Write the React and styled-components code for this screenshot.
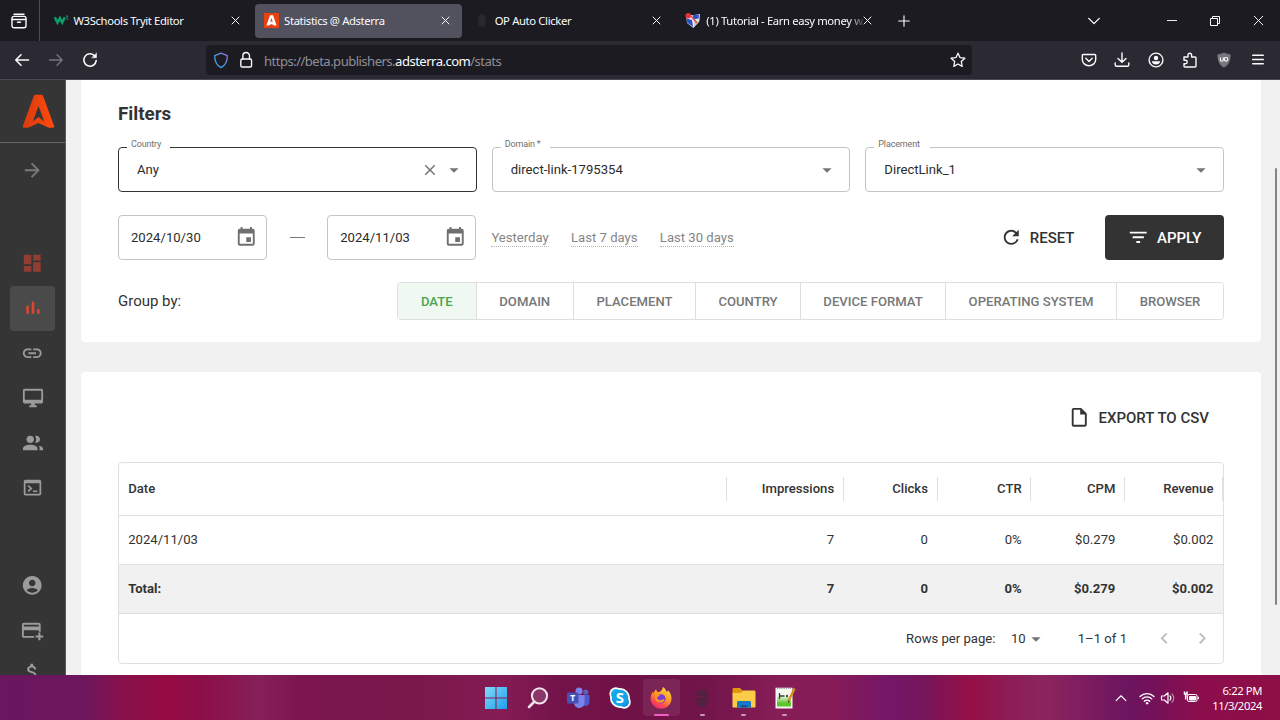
import React from "react";
import styled, { createGlobalStyle, css } from "styled-components";
import {
  MdAccountCircle,
  MdArrowDropDown,
  MdArrowForward,
  MdAttachMoney,
  MdChevronLeft,
  MdChevronRight,
  MdClose,
  MdDashboard,
  MdEvent,
  MdFilterList,
  MdLink,
  MdRefresh,
  MdOutlineInsertDriveFile,
} from "react-icons/md";

const GlobalStyle = createGlobalStyle`
  *, *::before, *::after { box-sizing: border-box; }
  body { margin: 0; overflow: hidden; background: #1c1b22; }
  svg { display: block; flex: none; }
`;

const ui = `"Noto Sans", "Open Sans", sans-serif`;

/* ---------- window ---------- */

const Window = styled.div`
  width: 1280px;
  height: 720px;
  display: flex;
  flex-direction: column;
  overflow: hidden;
  font-family: Roboto, sans-serif;
  color: #333;
`;

/* ---------- tab bar ---------- */

const TabBar = styled.div`
  height: 41px;
  flex: none;
  display: flex;
  align-items: center;
  background: #1c1b22;
  color: #fbfbfe;
`;

const ViewButton = styled.div`
  width: 40px;
  height: 41px;
  padding-left: 11px;
  display: flex;
  align-items: center;
  border-right: 1px solid #4b4a55;
`;

const Tabs = styled.div`
  display: flex;
  align-items: center;
  margin-left: 4.5px;
`;

const Tab = styled.div`
  width: 206.6px;
  margin-right: 4px;
  height: 34px;
  padding: 0 11.5px 0 9px;
  display: flex;
  align-items: center;
  border-radius: 4px;
  background: ${(p) => (p.$active ? "#52515e" : "transparent")};
`;

const TabTitle = styled.div`
  flex: 1;
  margin-left: 5px;
  padding-top: 1px;
  white-space: nowrap;
  font: 400 11.25px/16px ${ui};
  letter-spacing: -0.35px;
  ${(p) =>
    p.$fade &&
    css`
      mask-image: linear-gradient(to right, #000 calc(100% - 14px), transparent calc(100% + 3px));
    `}
`;

const WindowControls = styled.div`
  margin-left: auto;
  display: flex;
  align-items: center;
  padding-right: 16px;
`;

const ControlSlot = styled.div`
  width: ${(p) => p.$w}px;
  display: flex;
  justify-content: flex-end;
`;

const NewTab = styled.div`
  margin-left: 11.2px;
`;

/* ---------- toolbar ---------- */

const Toolbar = styled.div`
  height: 39px;
  flex: none;
  display: flex;
  align-items: center;
  background: #2b2a33;
  color: #fbfbfe;
  border-bottom: 1px solid #4a4953;
`;

const NavButtons = styled.div`
  width: 206px;
  display: flex;
  gap: 18px;
  padding-left: 14px;
`;

const AddressBar = styled.div`
  width: 766px;
  height: 30px;
  display: flex;
  align-items: center;
  padding: 0 6px 0 7px;
  border-radius: 4px;
  background: #1c1b22;
`;

const LockSlot = styled.span`
  margin-left: 7px;
`;

const Address = styled.div`
  flex: 1;
  margin-left: 6px;
  padding-top: 2px;
  font: 400 13.1px/20px ${ui};
  letter-spacing: -0.54px;
  color: #8f8f98;
  b {
    font-weight: 400;
    color: #fbfbfe;
  }
`;

const ToolbarActions = styled.div`
  display: flex;
  flex: 1;
  justify-content: flex-end;
  gap: 17.8px;
  padding-right: 14.5px;
`;

/* ---------- page ---------- */

const Page = styled.div`
  flex: 1;
  min-height: 0;
  display: flex;
  background: #f1f1f1;
`;

const Sidebar = styled.nav`
  width: 66px;
  display: flex;
  flex-direction: column;
  align-items: center;
  background: #353535;
  border-right: 1px solid #5a5a5a;
  overflow: hidden;
`;

const Brand = styled.div`
  width: 100%;
  height: 63px;
  flex: none;
  display: flex;
  padding: 14px 0 0 22px;
  border-bottom: 1px solid #666;
`;

const NavItem = styled.div`
  width: 45px;
  height: 44.8px;
  flex: none;
  display: flex;
  align-items: center;
  justify-content: center;
  border-radius: 4px;
  margin-top: ${(p) => p.$before || 0}px;
  color: ${(p) => p.$tone || "#9b9b9b"};
  background: ${(p) => (p.$active ? "#4a4a4a" : "transparent")};
`;

const Content = styled.main`
  flex: 1;
  display: flex;
  flex-direction: column;
  gap: 30px;
  padding: 0 14px 0 15px;
  overflow: hidden;
`;

const Card = styled.section`
  flex: none;
  height: ${(p) => p.$h}px;
  padding: 0 37px;
  background: #fff;
  border-radius: ${(p) => (p.$flush ? "0 0 4px 4px" : "4px")};
`;

const Heading = styled.h2`
  margin: 0;
  padding-top: 22px;
  font: 700 18.75px/24px Roboto, sans-serif;
`;

const FieldRow = styled.div`
  display: flex;
  gap: 15px;
  margin-top: 21px;
`;

const Field = styled.div`
  position: relative;
  flex: 1;
  height: 45px;
  display: flex;
  align-items: center;
  padding: 0 11px 0 18px;
  border: 1px solid ${(p) => (p.$focused ? "#333" : "#c4c4c4")};
  border-radius: 4px;
  font-size: 13.125px;
  color: #2c2c2c;
`;

const FieldLabel = styled.span`
  position: absolute;
  top: -10px;
  left: 8px;
  width: ${(p) => p.$w}px;
  height: 12px;
  padding-left: 4px;
  background: #fff;
  font-size: 9px;
  line-height: 13px;
  letter-spacing: -0.15px;
  white-space: nowrap;
  color: #707070;
`;

const FieldValue = styled.span`
  flex: 1;
`;

const FieldIcons = styled.span`
  display: flex;
  align-items: center;
  gap: 4px;
  color: #757575;
`;

const DateRow = styled.div`
  display: flex;
  align-items: center;
  margin-top: 23px;
`;

const DateField = styled.div`
  width: 149.2px;
  height: 45px;
  display: flex;
  align-items: center;
  justify-content: space-between;
  padding: 0 8.5px 0 12px;
  border: 1px solid #c4c4c4;
  border-radius: 4px;
  font-size: 13.125px;
  color: #2c2c2c;
  svg {
    color: #6f6f6f;
  }
`;

const RangeDash = styled.span`
  width: 15px;
  height: 1px;
  margin: 0 22.5px;
  background: #777;
`;

const Presets = styled.div`
  display: flex;
  gap: 22.3px;
  margin-left: 15px;
`;

const Preset = styled.a`
  font-size: 13.125px;
  line-height: 17px;
  color: #858585;
  border-bottom: 1px dotted #b5b5b5;
`;

const FilterActions = styled.div`
  display: flex;
  align-items: center;
  margin-left: auto;
`;

const ActionButton = styled.div`
  display: flex;
  align-items: center;
  height: 45px;
  gap: ${(p) => p.$gap || 7.5}px;
  font-size: 15px;
  font-weight: 500;
  white-space: nowrap;
`;

const ResetButton = styled(ActionButton)`
  margin-right: 30.5px;
`;

const ApplyButton = styled(ActionButton)`
  width: 119px;
  padding-left: 22px;
  border-radius: 4px;
  background: #333;
  color: #fff;
`;

const GroupRow = styled.div`
  display: flex;
  align-items: center;
  justify-content: space-between;
  margin-top: 22px;
  font-size: 15px;
`;

const ToggleGroup = styled.div`
  display: flex;
  height: 38px;
  border: 1px solid #dedede;
  border-radius: 4px;
  overflow: hidden;
`;

const Toggle = styled.div`
  width: ${(p) => p.$w}px;
  display: flex;
  align-items: center;
  justify-content: center;
  font-size: 13.125px;
  font-weight: 500;
  color: ${(p) => (p.$on ? "#4ca54f" : "#777")};
  background: ${(p) => (p.$on ? "#eff8f1" : "#fff")};
  & + & {
    border-left: 1px solid #dedede;
  }
`;

const ExportRow = styled.div`
  display: flex;
  justify-content: flex-end;
  padding: 23px 15px 0 0;
`;

/* ---------- table ---------- */

const Table = styled.div`
  margin-top: 22px;
  border: 1px solid #e0e0e0;
  border-radius: 4px;
  overflow: hidden;
  font-size: 13.125px;
`;

const Row = styled.div`
  display: grid;
  grid-template-columns: 1fr 117.2px 93.75px 93.75px 93.75px 98px;
  align-items: center;
  height: ${(p) => (p.$head ? 53 : 49)}px;
  border-bottom: 1px solid #e0e0e0;
  background: ${(p) => (p.$total ? "#f1f1f1" : "transparent")};
  font-weight: ${(p) => (p.$total ? 700 : p.$head ? 500 : 400)};
`;

const Cell = styled.div`
  padding: 0 8.6px 0 9.2px;
  text-align: right;
  line-height: 24px;
  border-right: ${(p) => (p.$sep ? "1px solid #e0e0e0" : "1px solid transparent")};
  &:first-child {
    text-align: left;
  }
`;

const Footer = styled.div`
  height: 49px;
  display: flex;
  align-items: center;
  justify-content: flex-end;
  padding-right: 10px;
`;

const PageSize = styled.span`
  display: flex;
  align-items: center;
  margin: 0 30.5px 0 15.5px;
  svg {
    color: #757575;
    margin-left: -0.5px;
  }
`;

const Pager = styled.span`
  display: flex;
  gap: 15px;
  margin-left: 26px;
  color: #bdbdbd;
`;

const ScrollTrack = styled.div`
  width: 5px;
  padding-top: 88px;
`;

const ScrollThumb = styled.div`
  width: 2px;
  height: 437px;
  border-radius: 1px;
  background: #858585;
`;

/* ---------- taskbar ---------- */

const Taskbar = styled.div`
  height: 45px;
  flex: none;
  display: flex;
  align-items: center;
  padding-left: 475.8px;
  color: #fff;
  background: linear-gradient(
    90deg,
    #6a1660 0px, #6d165c 85px, #84124e 115px, #960b43 163px, #8c0f48 205px, #86205a 258px,
    #7b1650 300px, #7a184b 420px, #851c55 500px, #73134a 560px, #6f1247 640px, #72154a 710px,
    #871d57 780px, #861b58 835px, #741767 890px, #77165b 925px, #960f47 970px, #8d1d56 1010px,
    #8b255e 1045px, #7e1c60 1085px, #6c155f 1125px, #741159 1155px, #8c0d4c 1200px, #8c0f45 1280px
  );
`;

const TaskItem = styled.div`
  width: 41.2px;
  height: 45px;
  flex: none;
  display: flex;
  flex-direction: column;
  align-items: center;
`;

const TaskTile = styled.div`
  width: 37px;
  height: 37px;
  margin-top: 4px;
  display: flex;
  flex-direction: column;
  align-items: center;
  justify-content: space-between;
  padding: 8px 0 0;
  border-radius: 4px;
  background: ${(p) => (p.$active ? "rgba(255,255,255,.08)" : "transparent")};
`;

const Indicator = styled.span`
  width: ${(p) => (p.$active ? 15 : 5)}px;
  height: 2.5px;
  border-radius: 2px;
  background: ${(p) => (p.$active ? "#f25fc4" : "#c79ab4")};
`;

const Tray = styled.div`
  margin-left: auto;
  display: flex;
  align-items: center;
  padding-right: 18px;
`;

const TrayIcons = styled.div`
  display: flex;
  align-items: center;
`;

const TraySlot = styled.span`
  margin-right: ${(p) => p.$after}px;
`;

const Clock = styled.div`
  width: 62px;
  text-align: right;
  white-space: nowrap;
  font: 400 11.25px/15px ${ui};
  letter-spacing: -0.4px;
`;

/* ---------- icons ---------- */

const Stroke = ({ size = 16, w = 1.3, children, ...rest }) => (
  <svg width={size} height={size} viewBox="0 0 16 16" fill="none" stroke="currentColor" strokeWidth={w} strokeLinecap="round" strokeLinejoin="round" {...rest}>
    {children}
  </svg>
);

const Cross = ({ size = 9, w = 1 }) => (
  <svg width={size} height={size} viewBox="0 0 9 9" stroke="currentColor" strokeWidth={w} strokeLinecap="round">
    <path d="M1 1l7 7M8 1L1 8" />
  </svg>
);

const W3Icon = () => (
  <svg width="15" height="15" viewBox="0 0 15 15" fill="none" stroke="#0c9f6a">
    <path d="M.8 4.200l2.700 5.300 2.400-4.300 2.300 4.300 2.600-5.300" strokeWidth="2.500" strokeLinejoin="miter" />
    <path d="M12 3h2l-1.200 1.600c1.400 0 1.400 2.200-.4 2" strokeWidth="1" />
  </svg>
);

const AdFavicon = () => (
  <svg width="15" height="15" viewBox="0 0 15 15">
    <rect width="15" height="15" fill="#e8400f" />
    <path fill="#fff" fillRule="evenodd" d="M6 2.200h3l3.600 10.200h-2.400L7.500 11l-2.700 1.400H2.400zM7.500 5l-1.300 4 1.300-.6 1.300.6z" />
  </svg>
);

const MouseFavicon = () => (
  <svg width="15" height="15" viewBox="0 0 15 15">
    <rect x="3.500" y="1" width="7" height="13" rx="3.500" fill="#29282e" />
  </svg>
);

const ShieldFavicon = () => (
  <svg width="16" height="15" viewBox="0 0 16 15">
    <path d="M1 1.500l7 .7 7-1.200-.7 7.500L8.400 15 2 10z" fill="#e8e6ee" />
    <path d="M8 2.200l6-.8-.4 4L8 6.500z" fill="#2a53c4" />
    <path d="M1.500 5.500L7 7l1 7-5.700-4.300z" fill="#2952c0" />
    <path d="M9 8.500l4.700-1.300-.4 2.600L9 13.500z" fill="#cfc6b4" />
    <path d="M6 3l6 7" stroke="#e04a52" strokeWidth="1.500" />
    <circle cx="3.200" cy="2.700" r="2.700" fill="#e8323c" />
  </svg>
);

const AdLogo = () => (
  <svg width="33" height="35" viewBox="0 0 33 35">
    <defs>
      <linearGradient id="brand" x1="0" x2="1">
        <stop offset="0" stopColor="#d93a10" />
        <stop offset="1" stopColor="#ff4a0c" />
      </linearGradient>
    </defs>
    <path
      fill="url(#brand)"
      fillRule="evenodd"
      d="M13.400 .8h6.100c.8 0 1.300.4 1.600 1.100l11 30.200c.3.900-.2 1.600-1.200 1.600h-4.200L16.500 29 6.200 33.700H2c-1 0-1.500-.7-1.200-1.600l11-30.200c.3-.7.8-1.100 1.600-1.100zM16.500 12L10.800 27.500l5.700-4.500 5.700 4.500z"
    />
  </svg>
);

const BarsIcon = () => (
  <svg width="14" height="14" viewBox="0 0 14 14" stroke="#e0442f" strokeWidth="2.600" strokeLinecap="round">
    <path d="M1.600 5.800v6M7 1.800v10M12.300 9.300v2.500" />
  </svg>
);

const DesktopIcon = () => (
  <svg width="22" height="22" viewBox="0 0 24 24" fill="currentColor">
    <path fillRule="evenodd" d="M21 2H3c-1.100 0-2 .9-2 2v12c0 1.100.9 2 2 2h7v2H8v2h8v-2h-2v-2h7c1.100 0 2-.9 2-2V4c0-1.100-.9-2-2-2zm0 12H3V4h18z" />
  </svg>
);

const PeopleIcon = () => (
  <svg width="22" height="22" viewBox="0 0 24 24" fill="currentColor">
    <circle cx="9" cy="8" r="4" />
    <path d="M1 18.500C1 15 5 13.800 9 13.800s8 1.200 8 4.700V20H1zM14.300 11.600c1.600-2.100 1.600-5.100 0-7.200 2.800-.9 5.300 1 5.300 3.600s-2.500 4.500-5.300 3.600zM19.200 20v-2.500c0-1.200-.4-1.900-.9-2.600 2.800.4 4.700 1.500 4.700 3.600V20z" />
  </svg>
);

const ConsoleIcon = () => (
  <svg width="21" height="21" viewBox="0 0 24 24" fill="currentColor">
    <path fillRule="evenodd" d="M4 3h16a2 2 0 012 2v14a2 2 0 01-2 2H4a2 2 0 01-2-2V5c0-1.100.9-2 2-2zm0 4v12h16V7z" />
    <path d="M7.700 9L12 13l-4.300 4-1.400-1.400L9.100 13l-2.800-2.600zM12.500 15.300h5V17h-5z" />
  </svg>
);

const CardPlusIcon = () => (
  <svg width="22.500" height="22.500" viewBox="0 0 24 24" fill="currentColor">
    <path fillRule="evenodd" d="M3 4h16c1.100 0 2 .9 2 2v7.500h-2V12H3v6h11v2H3c-1.100 0-2-.9-2-2V6c0-1.100.9-2 2-2zm0 2v2h16V6z" />
    <path d="M18.500 14.500h2.200v3h3v2.200h-3v3h-2.200v-3h-3v-2.200h3z" />
  </svg>
);

const WindowsIcon = () => (
  <svg width="22" height="22" viewBox="0 0 22 22">
    <defs>
      <linearGradient id="win" x1="0" y1="0" x2="1" y2="1">
        <stop offset="0" stopColor="#83dbfb" />
        <stop offset="1" stopColor="#1e9eea" />
      </linearGradient>
    </defs>
    <path fill="url(#win)" d="M0 0h10.500v10.500H0zM11.500 0H22v10.500H11.500zM0 11.500h10.500V22H0zM11.500 11.500H22V22H11.500z" />
  </svg>
);

const SearchIcon = () => (
  <svg width="22" height="22" viewBox="0 0 22 22" fill="none" stroke="#eee3ea" strokeLinecap="round">
    <circle cx="12.500" cy="8.800" r="7.600" strokeWidth="2" fill="#8a3767" />
    <path d="M7 15l-5 5" strokeWidth="2.600" />
  </svg>
);

const Glyph = styled.text`
  font-family: "Open Sans", sans-serif;
  font-weight: 700;
  text-anchor: middle;
`;

const TeamsIcon = () => (
  <svg width="23" height="22" viewBox="0 0 23 22">
    <circle cx="18.800" cy="5" r="2.600" fill="#5660c4" />
    <circle cx="12" cy="4" r="3.500" fill="#7b83eb" />
    <path d="M14 8h8.500v6.500c0 3-2 4.500-4.500 4.500h-4z" fill="#5059c9" />
    <path d="M7 8h10.500v7.500c0 3-2.300 5.500-5.300 5.500S7 18.500 7 15.500z" fill="#7b83eb" />
    <rect y="5.500" width="11.500" height="11" rx="1" fill="#4650b8" />
    <Glyph x="5.700" y="14" fontSize="8.500" fill="#fff">T</Glyph>
  </svg>
);

const SkypeIcon = () => (
  <svg width="22" height="22" viewBox="0 0 22 22">
    <circle cx="6.800" cy="6.800" r="6.500" fill="#fff" />
    <circle cx="15.200" cy="15.200" r="6.500" fill="#fff" />
    <circle cx="11" cy="11" r="10" fill="#fff" />
    <circle cx="7" cy="7" r="5" fill="#1bb2ee" />
    <circle cx="15" cy="15" r="5" fill="#1190dc" />
    <circle cx="11" cy="11" r="8.300" fill="#16a4e6" />
    <Glyph x="11" y="16.300" fontSize="15" fill="#fff">S</Glyph>
  </svg>
);

const FirefoxIcon = () => (
  <svg width="22" height="22" viewBox="0 0 22 22">
    <defs>
      <linearGradient id="fox" x1=".8" y1="0" x2=".25" y2="1">
        <stop offset="0" stopColor="#ffe03a" />
        <stop offset=".45" stopColor="#ff9a26" />
        <stop offset=".75" stopColor="#ff4a4c" />
        <stop offset="1" stopColor="#e8247f" />
      </linearGradient>
    </defs>
    <path fill="url(#fox)" d="M13 0c2 1.200 3 3 3.500 4.800.8-.1 1.400-.8 1.600-1.600 2.200 2.400 3.400 5.200 3.400 8 0 6-4.700 10.500-10.400 10.500S.6 17.300.6 11.500C.6 8.300 1.900 6 3 4.500c0 .8.200 1.300.6 1.700C4.400 4.600 5 3.300 6.200 2.300c.1 1.300.7 2.300 2 3C10.300 5.200 12.500 3 13 0z" />
    <circle cx="11" cy="11.800" r="4.600" fill="#7a3fd0" />
    <path fill="#ff9428" d="M5 8.200c2-1 4-.7 5 .4-1.400.2-1.500 1.300-3 1.800.5 2.600 3 3.600 5.400 2.200 1-.5 1.700-.3 2.200.2-.8 3-5.600 4-8 1.500C5 12.700 4.400 10 5 8.200z" />
  </svg>
);

const MouseIcon = () => (
  <svg width="22" height="22" viewBox="0 0 22 22">
    <rect x="5.500" y="2" width="11" height="18" rx="5.500" fill="#51213f" />
    <path d="M5.500 9.500h11M11 2v7.500" stroke="#6b1a4c" strokeWidth="1" />
  </svg>
);

const FolderIcon = () => (
  <svg width="24" height="22" viewBox="0 0 24 22">
    <path d="M.5 2.500c0-.9.6-1.500 1.500-1.500h6l2.500 2.500-2 3.500h-8z" fill="#e3980c" />
    <path d="M.5 6h8l2.300-2.500H22c.9 0 1.500.6 1.500 1.500v14.500c0 .7-.5 1-1 1H1.500c-.6 0-1-.4-1-1z" fill="#fbcd47" />
    <path d="M5 20.500v-5c0-1 .7-1.600 1.600-1.600h10.800c1 0 1.600.6 1.600 1.600v5z" fill="#1877c4" />
    <path d="M8.500 18h7v2.500h-7z" fill="#0c599f" />
  </svg>
);

const NotepadIcon = () => (
  <svg width="22" height="22" viewBox="0 0 22 22">
    <defs>
      <linearGradient id="note" x2="0" y2="1">
        <stop offset=".35" stopColor="#f4f8ee" />
        <stop offset=".8" stopColor="#5cc52c" />
      </linearGradient>
    </defs>
    <path d="M1.500.7h17V21.500h-17z" fill="#f5f5f5" />
    <path d="M3 3h14v16.500H3z" fill="url(#note)" />
    <path d="M3 1.500h14" stroke="#9aa39a" strokeWidth="1" strokeDasharray="1.200 1" />
    <path d="M5.500 6v6M5.500 9h4M9.500 9h1M12 9h2M13 7.800v2.400" stroke="#33412f" strokeWidth="1.300" />
    <path d="M20.500 1.500L14 15" stroke="#d8921f" strokeWidth="2.400" />
    <path d="M14.500 13.500l-1 3 2.300-2z" fill="#4b3a2a" />
  </svg>
);

/* ---------- data ---------- */

const tabs = [
  { title: "W3Schools Tryit Editor", icon: <W3Icon /> },
  { title: "Statistics @ Adsterra", icon: <AdFavicon />, active: true },
  { title: "OP Auto Clicker", icon: <MouseFavicon /> },
  { title: "(1) Tutorial - Earn easy money w", icon: <ShieldFavicon />, fade: true },
];

const groups = [
  ["DATE", 77.5],
  ["DOMAIN", 97.5],
  ["PLACEMENT", 122],
  ["COUNTRY", 105],
  ["DEVICE FORMAT", 145],
  ["OPERATING SYSTEM", 171],
  ["BROWSER", 107],
];

const tasks = [
  { id: "start", icon: <WindowsIcon /> },
  { id: "search", icon: <SearchIcon /> },
  { id: "teams", icon: <TeamsIcon /> },
  { id: "skype", icon: <SkypeIcon /> },
  { id: "firefox", icon: <FirefoxIcon />, open: true, active: true },
  { id: "clicker", icon: <MouseIcon />, open: true },
  { id: "files", icon: <FolderIcon />, open: true },
  { id: "notepad", icon: <NotepadIcon />, open: true },
];

/* ---------- sections ---------- */

const BrowserChrome = () => (
  <>
    <TabBar>
      <ViewButton>
        <Stroke w={1.4}>
          <path d="M3 1.200h10" />
          <rect x="1" y="3.400" width="14" height="11.400" rx="2" />
          <path d="M1 6.500h14M6.500 9.300h3" />
        </Stroke>
      </ViewButton>
      <Tabs>
        {tabs.map((t) => (
          <Tab key={t.title} $active={t.active}>
            {t.icon}
            <TabTitle $fade={t.fade}>{t.title}</TabTitle>
            <Cross />
          </Tab>
        ))}
      </Tabs>
      <NewTab>
        <Stroke size={12} w={1.500}>
          <path d="M8 1v14M1 8h14" />
        </Stroke>
      </NewTab>
      <WindowControls>
        <Stroke size={12} w={1.800}>
          <path d="M1 4.500l7 7 7-7" />
        </Stroke>
        <ControlSlot $w={77}>
          <svg width="10" height="10"><path d="M0 4.500h10" stroke="#e8e8ec" /></svg>
        </ControlSlot>
        <ControlSlot $w={43}>
          <svg width="10" height="10" fill="none" stroke="#fbfbfe">
            <path d="M.5 2.500h7v7h-7zM2.500 2.500v-2h7v7h-2" />
          </svg>
        </ControlSlot>
        <ControlSlot $w={44}>
          <Cross size={11} w={0.8} />
        </ControlSlot>
      </WindowControls>
    </TabBar>
    <Toolbar>
      <NavButtons>
        <Stroke w={1.600}><path d="M14.500 8H1.800M7 2.800L1.800 8 7 13.200" /></Stroke>
        <Stroke w={1.300} color="#77767f"><path d="M1.500 8h12.700M9 2.800L14.200 8 9 13.200" /></Stroke>
        <Stroke w={1.600}>
          <path d="M14.200 8.600A6.200 6.200 0 1 1 12.800 4" />
          <path d="M14.500 1.300v4.500H10z" fill="currentColor" strokeWidth=".5" />
        </Stroke>
      </NavButtons>
      <AddressBar>
        <svg width="16" height="17" viewBox="0 0 16 17" fill="none">
          <defs>
            <linearGradient id="protect" x1="0" y1="1" x2="1" y2="0">
              <stop offset="0" stopColor="#2fb2e8" />
              <stop offset=".6" stopColor="#5f93dc" />
              <stop offset="1" stopColor="#a06ad8" />
            </linearGradient>
          </defs>
          <path d="M8 1.200l6.300 2.400c.1 5.400-1.500 9.700-6.300 12C3.200 13.300 1.600 9 1.700 3.600z" stroke="url(#protect)" strokeWidth="1.300" strokeLinejoin="round" />
        </svg>
        <LockSlot>
          <Stroke size={22} w={1}>
            <rect x="3.500" y="7.300" width="7.800" height="5.800" rx="1" />
            <path d="M5 7.200V4.900a2.400 2.400 0 0 1 4.800 0v2.300" />
          </Stroke>
        </LockSlot>
        <Address>https://beta.publishers.<b>adsterra.com</b>/stats</Address>
        <Stroke w={1.300}>
          <path d="M8 1.200l2 4.400 4.900.6-3.600 3.300.9 4.900L8 12l-4.200 2.400.9-4.900L1.100 6.200l4.900-.6z" />
        </Stroke>
      </AddressBar>
      <ToolbarActions>
        <Stroke w={1.400}>
          <path d="M2.300 2.500h11.400c.6 0 1 .4 1 1v4a6.700 6.200 0 0 1-13.400 0v-4c0-.6.400-1 1-1z" />
          <path d="M4.800 6.300L8 9.400l3.200-3.100" />
        </Stroke>
        <Stroke w={1.400}>
          <path d="M8 1v9M4 6.500L8 10.300l4-3.800M1.200 11v1.800c0 1 .6 1.500 1.500 1.500h10.600c.9 0 1.500-.5 1.500-1.500V11" />
        </Stroke>
        <Stroke w={1.400}>
          <circle cx="8" cy="8" r="6.900" />
          <circle cx="8" cy="6" r="2.200" fill="currentColor" stroke="none" />
          <path d="M3.800 9.300h8.400C11.900 11.400 10 12.500 8 12.500s-3.900-1.100-4.200-3.200z" fill="currentColor" stroke="none" />
        </Stroke>
        <Stroke w={1.400}>
          <path d="M2 5h4V3a1.800 1.800 0 0 1 3.600 0v2H13c.6 0 1 .4 1 1v8c0 .6-.4 1-1 1H3c-.6 0-1-.4-1-1v-2.300h1.500a1.700 1.700 0 0 0 0-3.400H2z" />
        </Stroke>
        <svg width="16" height="16" viewBox="0 0 16 16">
          <path d="M8 .5c2 1.200 4.400 1.800 6.500 1.800C14.700 9 12.600 13.300 8 15.500 3.400 13.300 1.300 9 1.500 2.300 3.600 2.300 6 1.700 8 .5z" fill="#77777d" />
          <path d="M4.300 5.500v2.200a1.500 1.500 0 0 0 3 0V5.500" fill="none" stroke="#fff" strokeWidth="1.100" />
          <circle cx="10" cy="7.300" r="1.800" fill="none" stroke="#fff" strokeWidth="1.100" />
        </svg>
        <Stroke w={1.400}><path d="M2.700 3.200h10.600M2.700 7.500h10.600M2.700 11.800h10.600" /></Stroke>
      </ToolbarActions>
    </Toolbar>
  </>
);

const SideNav = () => (
  <Sidebar>
    <Brand><AdLogo /></Brand>
    <NavItem $before={4.500} $tone="#7b7b7b"><MdArrowForward size={22.500} /></NavItem>
    <NavItem $before={48.700} $tone="#913d33"><MdDashboard size={22.500} /></NavItem>
    <NavItem $active><BarsIcon /></NavItem>
    <NavItem><MdLink size={22.500} /></NavItem>
    <NavItem><DesktopIcon /></NavItem>
    <NavItem><PeopleIcon /></NavItem>
    <NavItem><ConsoleIcon /></NavItem>
    <NavItem $before={53.500}><MdAccountCircle size={22.500} /></NavItem>
    <NavItem><CardPlusIcon /></NavItem>
    <NavItem $before={-3.500}><MdAttachMoney size={22.500} /></NavItem>
  </Sidebar>
);

const Filters = () => (
  <Card $h={262} $flush>
    <Heading>Filters</Heading>
    <FieldRow>
      <Field $focused>
        <FieldLabel $w={43}>Country</FieldLabel>
        <FieldValue>Any</FieldValue>
        <FieldIcons>
          <MdClose size={18} />
          <MdArrowDropDown size={22} />
        </FieldIcons>
      </Field>
      <Field>
        <FieldLabel $w={49}>Domain *</FieldLabel>
        <FieldValue>direct-link-1795354</FieldValue>
        <FieldIcons><MdArrowDropDown size={22} /></FieldIcons>
      </Field>
      <Field>
        <FieldLabel $w={56}>Placement</FieldLabel>
        <FieldValue>DirectLink_1</FieldValue>
        <FieldIcons><MdArrowDropDown size={22} /></FieldIcons>
      </Field>
    </FieldRow>
    <DateRow>
      <DateField>2024/10/30<MdEvent size={22.500} /></DateField>
      <RangeDash />
      <DateField>2024/11/03<MdEvent size={22.500} /></DateField>
      <Presets>
        <Preset>Yesterday</Preset>
        <Preset>Last 7 days</Preset>
        <Preset>Last 30 days</Preset>
      </Presets>
      <FilterActions>
        <ResetButton><MdRefresh size={22.500} />RESET</ResetButton>
        <ApplyButton><MdFilterList size={22.500} />APPLY</ApplyButton>
      </FilterActions>
    </DateRow>
    <GroupRow>
      <span>Group by:</span>
      <ToggleGroup>
        {groups.map(([name, w], i) => (
          <Toggle key={name} $w={w} $on={i === 0}>{name}</Toggle>
        ))}
      </ToggleGroup>
    </GroupRow>
  </Card>
);

const Report = () => (
  <Card $h={340}>
    <ExportRow>
      <ActionButton><MdOutlineInsertDriveFile size={22.500} />EXPORT TO CSV</ActionButton>
    </ExportRow>
    <Table>
      <Row $head>
        {["Date", "Impressions", "Clicks", "CTR", "CPM", "Revenue"].map((h) => (
          <Cell key={h} $sep>{h}</Cell>
        ))}
      </Row>
      <Row>
        {["2024/11/03", "7", "0", "0%", "$0.279", "$0.002"].map((v, i) => (
          <Cell key={i}>{v}</Cell>
        ))}
      </Row>
      <Row $total>
        {["Total:", "7", "0", "0%", "$0.279", "$0.002"].map((v, i) => (
          <Cell key={i}>{v}</Cell>
        ))}
      </Row>
      <Footer>
        <span>Rows per page:</span>
        <PageSize>10<MdArrowDropDown size={22} /></PageSize>
        <span>1–1 of 1</span>
        <Pager>
          <MdChevronLeft size={22.500} />
          <MdChevronRight size={22.500} />
        </Pager>
      </Footer>
    </Table>
  </Card>
);

const DesktopTaskbar = () => (
  <Taskbar>
    {tasks.map((t) => (
      <TaskItem key={t.id}>
        <TaskTile $active={t.active}>
          {t.icon}
          {t.open && <Indicator $active={t.active} />}
        </TaskTile>
      </TaskItem>
    ))}
    <Tray>
      <TrayIcons>
        <TraySlot $after={12}>
          <Stroke size={12} w={1.500}><path d="M1.500 11.500L8 5l6.500 6.500" /></Stroke>
        </TraySlot>
        <TraySlot $after={5.500}>
          <Stroke size={16} w={1.300}>
            <path d="M1 6.500a10 10 0 0 1 14 0M3.200 8.900a6.800 6.800 0 0 1 9.600 0M5.300 11.200a3.800 3.800 0 0 1 5.400 0" />
            <circle cx="8" cy="13.200" r="1" fill="currentColor" strokeWidth=".5" />
          </Stroke>
        </TraySlot>
        <TraySlot $after={7}>
          <Stroke size={16} w={1.200}>
            <path d="M1.500 6h2.800L8 2.800v10.400L4.300 10H1.500zM10 6a3 3 0 0 1 0 4" />
            <path d="M12 3.800a6 6 0 0 1 0 8.400" opacity=".5" />
          </Stroke>
        </TraySlot>
        <TraySlot $after={1}>
          <svg width="16" height="13" viewBox="0 0 16 13" fill="none" stroke="#fff">
            <rect x="4.500" y="3.500" width="9.500" height="7" rx="1.500" />
            <path d="M6.500 5.500h6v3.500h-6z" fill="#fff" />
            <path d="M15.300 5.800v2.500" strokeWidth="1.200" />
            <path d="M1.500.5v2M4 .5v2M.8 3h4M2.700 3v5.500" strokeWidth="1.600" />
          </svg>
        </TraySlot>
      </TrayIcons>
      <Clock>
        6:22 PM
        <br />
        11/3/2024
      </Clock>
    </Tray>
  </Taskbar>
);

export default function App() {
  return (
    <Window>
      <GlobalStyle />
      <BrowserChrome />
      <Page>
        <SideNav />
        <Content>
          <Filters />
          <Report />
        </Content>
        <ScrollTrack><ScrollThumb /></ScrollTrack>
      </Page>
      <DesktopTaskbar />
    </Window>
  );
}
